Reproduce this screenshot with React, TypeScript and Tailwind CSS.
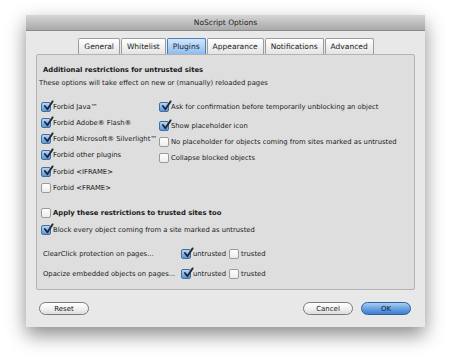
import React from 'react';

const font = { fontFamily: '"DejaVu Sans", Verdana, sans-serif' };

const Check: React.FC<{ checked?: boolean }> = ({ checked = false }) => (
  <span
    className={`relative inline-flex h-[10px] w-[10px] shrink-0 items-center justify-center rounded-[2px] border ${
      checked
        ? 'border-[#3d6fa8] bg-gradient-to-b from-[#b9d4f0] to-[#5f95d2]'
        : 'border-[#9a9a9a] bg-gradient-to-b from-white to-[#ececec]'
    }`}
  >
    {checked && (
      <svg viewBox="0 0 12 12" className="absolute -top-[3px] left-[1px] h-[11px] w-[11px]">
        <path d="M2 6.5 L4.8 10 L10.5 1.5" fill="none" stroke="#1b2a3e" strokeWidth="2" strokeLinecap="round" strokeLinejoin="round" />
      </svg>
    )}
  </span>
);

const Option: React.FC<{ label: string; checked?: boolean; bold?: boolean }> = ({ label, checked, bold }) => (
  <div className="flex h-[10px] items-center gap-[2px]">
    <Check checked={checked} />
    <span className={`whitespace-nowrap text-[#1a1a1a] ${bold ? 'font-bold' : ''}`}>{label}</span>
  </div>
);

const tabs = ['General', 'Whitelist', 'Plugins', 'Appearance', 'Notifications', 'Advanced'];

const Button: React.FC<{ label: string; primary?: boolean }> = ({ label, primary }) => (
  <button
    type="button"
    className={`flex h-[13px] w-[50px] items-center justify-center rounded-full border text-[7px] ${
      primary
        ? 'border-[#2f5f9e] bg-gradient-to-b from-[#a9cdf2] via-[#6aa3e0] to-[#3d7fd0] text-[#10243d]'
        : 'border-[#7a7a7a] bg-gradient-to-b from-white via-[#f2f2f2] to-[#dcdcdc] text-[#1a1a1a]'
    }`}
  >
    {label}
  </button>
);

export default function App() {
  return (
    <div className="h-[364px] w-[450px] overflow-hidden bg-white pl-[26px] pt-[15px]" style={font}>
      <div className="flex h-[312px] w-[399px] flex-col bg-[#e8e8e8] text-[6.8px] leading-[10px] shadow-[0_8px_18px_rgba(0,0,0,0.45)]">
        <div className="flex h-[16px] items-center justify-center border-b border-[#8a8a8a] bg-gradient-to-b from-[#d6d6d6] to-[#a9a9a9] text-[7.5px] text-[#222]">
          NoScript Options
        </div>

        <div className="relative z-10 mt-[7px] flex justify-center gap-[1px] pl-[1px]">
          {tabs.map((t) => (
            <div
              key={t}
              className={`flex h-[16px] items-center rounded-t-[2px] border border-b-0 px-[5px] text-[7.5px] ${
                t === 'Plugins'
                  ? 'border-[#4b7fc0] bg-gradient-to-b from-[#d4e6fa] to-[#8fbcec] text-[#0f2340]'
                  : 'border-[#9c9c9c] bg-gradient-to-b from-white to-[#e4e4e4] text-[#1a1a1a]'
              }`}
            >
              {t}
            </div>
          ))}
        </div>

        <div className="mx-[10px] flex h-[236px] flex-col rounded-[2px] border border-[#b4b4b4] bg-[#dedede] px-[4px] pt-[10px]">
          <div className="pl-[2px] font-bold text-[#1a1a1a]">Additional restrictions for untrusted sites</div>
          <div className="mt-[3px] -ml-[2px] text-[#1a1a1a]">These options will take effect on new or (manually) reloaded pages</div>

          <div className="mt-[14px] flex">
            <div className="flex w-[118px] flex-col gap-[6px]">
              <Option label="Forbid Java™" checked />
              <Option label="Forbid Adobe® Flash®" checked />
              <Option label="Forbid Microsoft® Silverlight™" checked />
              <Option label="Forbid other plugins" checked />
              <div className="mt-[1px] flex flex-col gap-[6px]">
                <Option label="Forbid <IFRAME>" checked />
                <Option label="Forbid <FRAME>" />
              </div>
            </div>
            <div className="flex flex-col gap-[6px]">
              <Option label="Ask for confirmation before temporarily unblocking an object" checked />
              <div className="mt-[3px] flex flex-col gap-[6px]">
                <Option label="Show placeholder icon" checked />
                <Option label="No placeholder for objects coming from sites marked as untrusted" />
                <Option label="Collapse blocked objects" />
              </div>
            </div>
          </div>

          <div className="mt-[15px] flex flex-col gap-[7px]">
            <Option label="Apply these restrictions to trusted sites too" bold />
            <Option label="Block every object coming from a site marked as untrusted" checked />
          </div>

          <div className="mt-[14px] flex flex-col gap-[10px] pl-[2px]">
            {['ClearClick protection on pages...', 'Opacize embedded objects on pages...'].map((l) => (
              <div key={l} className="flex h-[10px] items-center">
                <span className="w-[138px] whitespace-nowrap text-[#1a1a1a]">{l}</span>
                <div className="flex items-center gap-[3px]">
                  <Option label="untrusted" checked />
                  <Option label="trusted" />
                </div>
              </div>
            ))}
          </div>
        </div>

        <div className="mt-[12px] flex items-center pl-[13px] pr-[14px]">
          <Button label="Reset" />
          <div className="ml-auto flex gap-[8px]">
            <Button label="Cancel" />
            <Button label="OK" primary />
          </div>
        </div>
      </div>
    </div>
  );
}
